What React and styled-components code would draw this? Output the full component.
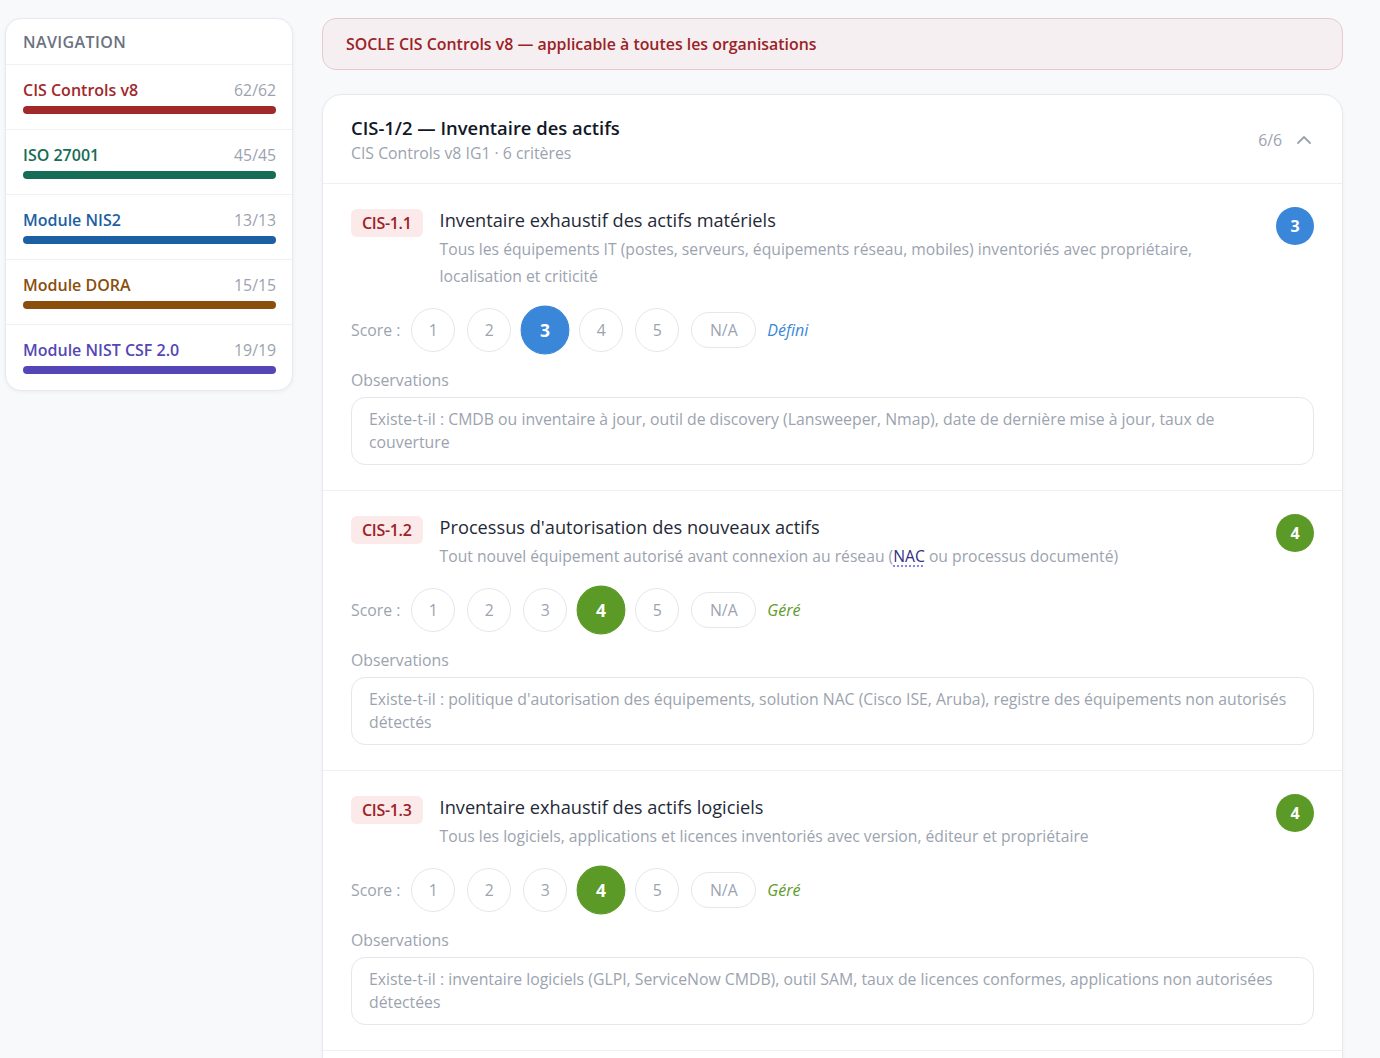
import React from "react";
import styled, { createGlobalStyle, css } from "styled-components";

const FONT = `"Open Sans", "Noto Sans", sans-serif`;

const Global = createGlobalStyle`
  * { box-sizing: border-box; }
  html, body { margin: 0; padding: 0; background: #f8f9fb; }
  body { font-family: ${FONT}; color: #1f2937; }
`;

const Page = styled.div`
  display: grid;
  grid-template-columns: 288px 1fr;
  gap: 29px;
  align-items: start;
  padding: 18px 37px 0 5px;
  height: 1058px;
  overflow: hidden;
`;

const Sidebar = styled.nav`
  background: #fff;
  border: 1px solid #e7e9ee;
  border-radius: 16px;
  box-shadow: 0 1px 4px rgba(17, 24, 39, 0.05);
  overflow: hidden;
`;

const NavHeader = styled.div`
  height: 46px;
  display: flex;
  align-items: center;
  padding: 0 17px;
  font-size: 16px;
  font-weight: 600;
  letter-spacing: 0.4px;
  text-transform: uppercase;
  color: #6b7280;
  border-bottom: 1px solid #f0f1f4;
`;

const NavItem = styled.div`
  height: 65px;
  padding: 14px 16px 0 17px;
  border-bottom: 1px solid #f0f1f4;
  &:last-child { border-bottom: none; }
`;

const NavTop = styled.div`
  display: flex;
  justify-content: space-between;
  align-items: center;
  height: 22px;
`;

const NavName = styled.span`
  font-size: 16px;
  font-weight: 600;
  color: ${(p) => p.$color};
`;

const NavCount = styled.span`
  font-size: 15.8px;
  color: #9ca3af;
`;

const NavBar = styled.div`
  margin-top: 5px;
  height: 8px;
  border-radius: 4px;
  background: ${(p) => p.$color};
`;

const Main = styled.main`
  display: flex;
  flex-direction: column;
  gap: 24px;
`;

const Banner = styled.div`
  height: 52px;
  display: flex;
  align-items: center;
  padding: 0 23px;
  background: #f6eff1;
  border: 1px solid #e9c9ce;
  border-radius: 14px;
  font-size: 15.9px;
  font-weight: 600;
  color: #9b2226;
`;

const Card = styled.section`
  background: #fff;
  border: 1px solid #e7e9ee;
  border-radius: 20px;
  box-shadow: 0 1px 4px rgba(17, 24, 39, 0.04);
`;

const CardHeader = styled.header`
  display: flex;
  align-items: center;
  justify-content: space-between;
  padding: 19px 28px 18px 28px;
  border-bottom: 1px solid #eef0f3;
`;

const CardTitle = styled.h2`
  margin: 0;
  font-size: 18.4px;
  line-height: 27px;
  font-weight: 600;
  color: #111827;
`;

const CardSub = styled.div`
  margin-top: 1px;
  font-size: 15.8px;
  line-height: 23px;
  color: #9ca3af;
`;

const HeaderRight = styled.div`
  display: flex;
  align-items: center;
  gap: 14px;
  color: #9ca3af;
  font-size: 15.8px;
  padding-right: 2px;
`;

const Row = styled.article`
  padding: 25px 28px 25px 28px;
  border-bottom: 1px solid #eef0f3;
`;

const RowTop = styled.div`
  display: flex;
  align-items: flex-start;
  gap: 17px;
`;

const Badge = styled.span`
  flex: none;
  height: 28px;
  display: inline-flex;
  align-items: center;
  padding: 0 11px;
  border-radius: 6px;
  background: #fce9ea;
  color: #9b2226;
  font-size: 16px;
  font-weight: 600;
  letter-spacing: -0.3px;
`;

const RowText = styled.div`
  flex: 1;
  min-width: 0;
  margin-top: -3px;
`;

const RowTitle = styled.h3`
  margin: 0;
  font-size: 18.2px;
  line-height: 28px;
  font-weight: 400;
  color: #1f2937;
`;

const RowDesc = styled.p`
  margin: 2px 0 0;
  font-size: 15.7px;
  line-height: 27px;
  color: #9ca3af;
  padding-right: 20px;
`;

const Abbr = styled.abbr`
  color: #312e81;
  text-decoration: underline dotted #6366f1;
  text-underline-offset: 4px;
`;

const LEVEL = {
  3: "#3a87d9",
  4: "#5c9a27",
};

const ScoreBubble = styled.span`
  flex: none;
  width: 38px;
  height: 38px;
  border-radius: 50%;
  margin-top: -2px;
  display: inline-flex;
  align-items: center;
  justify-content: center;
  background: ${(p) => LEVEL[p.$v]};
  color: #fff;
  font-weight: 700;
  font-size: 16px;
`;

const ScoreRow = styled.div`
  display: flex;
  align-items: center;
  gap: 12px;
  margin-top: 18px;
  height: 44px;
`;

const ScoreLabel = styled.span`
  font-size: 15.8px;
  color: #9ca3af;
  margin-right: -1px;
`;

const ScoreBtn = styled.button`
  font-family: ${FONT};
  width: 44px;
  height: 44px;
  border-radius: 50%;
  border: 1px solid #e5e7eb;
  background: #fff;
  color: #9ca3af;
  font-size: 15.8px;
  font-weight: 500;
  display: inline-flex;
  align-items: center;
  justify-content: center;
  padding: 0;
  cursor: pointer;
  ${(p) =>
    p.$active &&
    css`
      background: ${p.$color};
      border-color: ${p.$color};
      color: #fff;
      font-weight: 700;
      transform: scale(1.11);
    `}
`;

const NaBtn = styled.button`
  font-family: ${FONT};
  height: 36px;
  width: 65px;
  border-radius: 18px;
  border: 1px solid #e5e7eb;
  background: #fff;
  color: #9ca3af;
  font-size: 15.8px;
  padding: 0;
`;

const LevelText = styled.span`
  font-style: italic;
  font-size: 16px;
  color: ${(p) => p.$color};
  margin-left: -1px;
`;

const ObsLabel = styled.div`
  margin-top: 17px;
  font-size: 15.8px;
  line-height: 22px;
  color: #9ca3af;
`;

const ObsArea = styled.textarea`
  display: block;
  width: 100%;
  height: 68px;
  margin-top: 6px;
  padding: 10px 22px 10px 17px;
  border: 1px solid #e5e7eb;
  border-radius: 14px;
  resize: none;
  overflow: hidden;
  font-family: ${FONT};
  font-size: 15.8px;
  line-height: 23px;
  color: #374151;
  outline: none;
  &::placeholder { color: #9ca3af; }
`;

const nav = [
  { name: "CIS Controls v8", count: "62/62", color: "#a0292b" },
  { name: "ISO 27001", count: "45/45", color: "#176c55" },
  { name: "Module NIS2", count: "13/13", color: "#1d5fa3" },
  { name: "Module DORA", count: "15/15", color: "#8a4f0c" },
  { name: "Module NIST CSF 2.0", count: "19/19", color: "#5447b5" },
];

const criteria = [
  {
    id: "CIS-1.1",
    title: "Inventaire exhaustif des actifs matériels",
    desc: "Tous les équipements IT (postes, serveurs, équipements réseau, mobiles) inventoriés avec propriétaire, localisation et criticité",
    score: 3,
    level: "Défini",
    obs: "Existe-t-il : CMDB ou inventaire à jour, outil de discovery (Lansweeper, Nmap), date de dernière mise à jour, taux de couverture",
  },
  {
    id: "CIS-1.2",
    title: "Processus d'autorisation des nouveaux actifs",
    desc: (
      <>
        Tout nouvel équipement autorisé avant connexion au réseau (
        <Abbr title="Network Access Control">NAC</Abbr> ou processus documenté)
      </>
    ),
    score: 4,
    level: "Géré",
    obs: "Existe-t-il : politique d'autorisation des équipements, solution NAC (Cisco ISE, Aruba), registre des équipements non autorisés détectés",
  },
  {
    id: "CIS-1.3",
    title: "Inventaire exhaustif des actifs logiciels",
    desc: "Tous les logiciels, applications et licences inventoriés avec version, éditeur et propriétaire",
    score: 4,
    level: "Géré",
    obs: "Existe-t-il : inventaire logiciels (GLPI, ServiceNow CMDB), outil SAM, taux de licences conformes, applications non autorisées détectées",
  },
];

const ChevronUp = () => (
  <svg width="16" height="16" viewBox="0 0 16 16" fill="none">
    <path d="M2 11 L8 5 L14 11" stroke="#9ca3af" strokeWidth="1.8" strokeLinecap="round" strokeLinejoin="round" />
  </svg>
);

export default function App() {
  return (
    <>
      <Global />
      <Page>
        <Sidebar>
          <NavHeader>Navigation</NavHeader>
          {nav.map((n) => (
            <NavItem key={n.name}>
              <NavTop>
                <NavName $color={n.color}>{n.name}</NavName>
                <NavCount>{n.count}</NavCount>
              </NavTop>
              <NavBar $color={n.color} />
            </NavItem>
          ))}
        </Sidebar>
        <Main>
          <Banner>SOCLE CIS Controls v8 — applicable à toutes les organisations</Banner>
          <Card>
            <CardHeader>
              <div>
                <CardTitle>CIS-1/2 — Inventaire des actifs</CardTitle>
                <CardSub>CIS Controls v8 IG1 · 6 critères</CardSub>
              </div>
              <HeaderRight>
                <span>6/6</span>
                <ChevronUp />
              </HeaderRight>
            </CardHeader>
            {criteria.map((c) => (
              <Row key={c.id}>
                <RowTop>
                  <Badge>{c.id}</Badge>
                  <RowText>
                    <RowTitle>{c.title}</RowTitle>
                    <RowDesc>{c.desc}</RowDesc>
                  </RowText>
                  <ScoreBubble $v={c.score}>{c.score}</ScoreBubble>
                </RowTop>
                <ScoreRow>
                  <ScoreLabel>Score :</ScoreLabel>
                  {[1, 2, 3, 4, 5].map((v) => (
                    <ScoreBtn key={v} $active={v === c.score} $color={LEVEL[c.score]}>
                      {v}
                    </ScoreBtn>
                  ))}
                  <NaBtn>N/A</NaBtn>
                  <LevelText $color={LEVEL[c.score]}>{c.level}</LevelText>
                </ScoreRow>
                <ObsLabel>Observations</ObsLabel>
                <ObsArea rows={2} placeholder={c.obs} />
              </Row>
            ))}
            <Row />
          </Card>
        </Main>
      </Page>
    </>
  );
}
